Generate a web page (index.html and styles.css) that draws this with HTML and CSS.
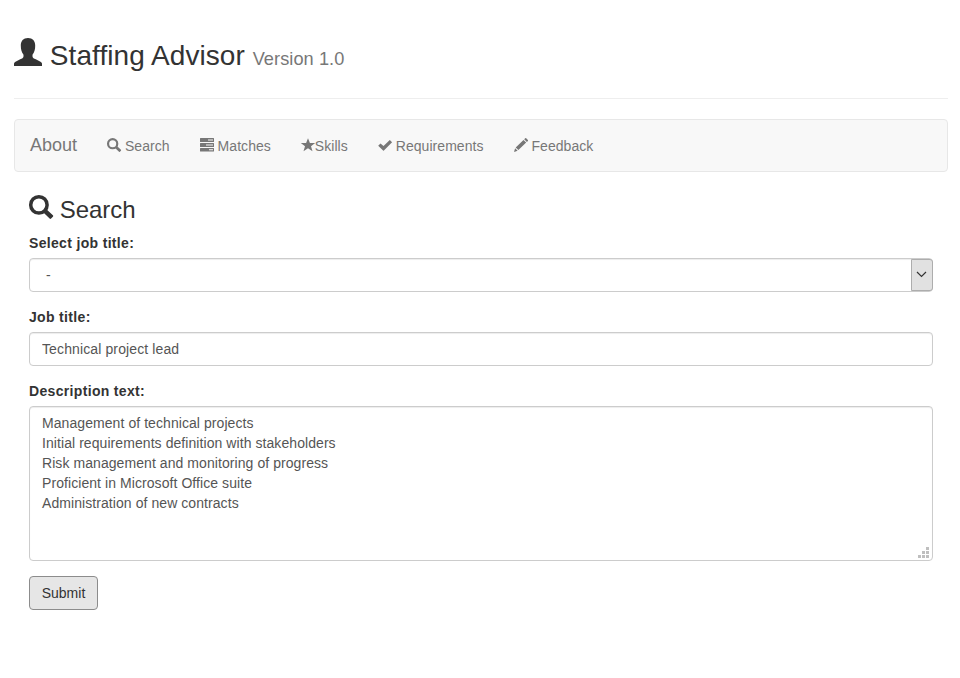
FILE: index.html
```html
<!DOCTYPE html>
<html lang="en">
<head>
<meta charset="utf-8">
<title>Staffing Advisor</title>
<link rel="stylesheet" href="styles.css">
</head>
<body>
<div class="container">
  <header class="page-header">
    <h1><svg class="icon" viewBox="0 0 28 28"><path d="M14 0C9.300 0 6.800 3 6.800 7.500c0 4 .7 6.500 2.700 9.200v1.700c-.3 1.500-1.300 2-3.300 2.900L1.500 23.800C.5 24.400 0 24.900 0 26v2h28v-2c0-1.100-.5-1.600-1.500-2.200l-4.700-2.500c-2-.9-3-1.400-3.300-2.900v-1.700c2-2.700 2.700-5.200 2.700-9.200C21.200 3 18.700 0 14 0z"/></svg> Staffing Advisor <small>Version 1.0</small></h1>
  </header>
  <nav class="navbar">
    <a class="brand">About</a>
    <a><svg class="icon" viewBox="0 0 24 24"><circle cx="9.700" cy="9.700" r="7.900" fill="none" stroke="currentColor" stroke-width="3.700"/><path d="M13.400 16.600l3.200-3.200 7.300 6.800c.5.500.5 1 0 1.500l-1.800 1.800c-.5.500-1 .5-1.500 0z"/></svg> Search</a>
    <a><svg class="icon" viewBox="0 0 14 14"><path fill-rule="evenodd" d="M.5 0h13q.5 0 .5.500v3q0 .5-.5.500H.5Q0 4 0 3.500v-3Q0 0 .5 0zM8 1.500v1h5v-1zM.5 5h13q.5 0 .5.500v3q0 .5-.5.500H.5Q0 9 0 8.500v-3q0-.5.500-.5zM6 6.500v1h7v-1zM.5 10h13q.5 0 .5.500v2.500q0 .5-.5.500H.5Q0 13.500 0 13v-2.500q0-.5.500-.5zM9 11.300v1h4v-1z"/></svg> Matches</a>
    <a><svg class="icon" viewBox="0 0 14 14"><path d="M7 .2l1.900 4.900H14.200L10 8.300l1.500 5L7 10.200l-4.500 3.100 1.500-5L-.2 5.100h5.300z"/></svg>Skills</a>
    <a><svg class="icon" viewBox="0 0 14 14"><path d="M11.800 1.900l2.300 2.400-8.200 8.200q-.4.400-.8 0L.2 7.800 2.500 5.400l3 2.700z"/></svg> Requirements</a>
    <a><svg class="icon" viewBox="0 0 14 14"><path d="M11.200.3q.5-.4 1 0l1.700 1.600q.4.500 0 1l-1 1L10.200 1.200zM9.500 1.900l2.700 2.700-7.800 7.500-2.700-2.600zM1.100 10.300l2.500 2.500L0 14z"/></svg> Feedback</a>
  </nav>
  <main>
    <h3><svg class="icon" viewBox="0 0 24 24"><circle cx="9.900" cy="9.900" r="8.200" fill="none" stroke="currentColor" stroke-width="3.500"/><path d="M13.400 16.600l3.200-3.200 7.300 6.800c.5.500.5 1 0 1.500l-1.800 1.800c-.5.500-1 .5-1.500 0z"/></svg> Search</h3>
    <form>
      <div class="group">
        <label>Select job title:</label>
        <div class="control select"><span>-</span><div class="arrow"><svg width="11" height="7" viewBox="0 0 11 7"><path d="M1 1l4.500 4.500L10 1" fill="none" stroke="#333" stroke-width="1.200"/></svg></div></div>
      </div>
      <div class="group">
        <label for="title">Job title:</label>
        <input id="title" class="control" type="text" value="Technical project lead">
      </div>
      <div class="group area">
        <label for="desc">Description text:</label>
        <textarea id="desc" class="control">Management of technical projects
Initial requirements definition with stakeholders
Risk management and monitoring of progress
Proficient in Microsoft Office suite
Administration of new contracts</textarea>
        <svg class="grip" width="11" height="11" viewBox="0 0 11 11"><path d="M8 0h3v3H8zM4 4h3v3H4zM8 4h3v3H8zM0 8h3v3H0zM4 8h3v3H4zM8 8h3v3H8z"/></svg>
      </div>
      <button type="button">Submit</button>
    </form>
  </main>
</div>
</body>
</html>
```
FILE: styles.css
```css
* { box-sizing: border-box; }
body {
  margin: 0;
  background: #fff;
  color: #333;
  font: 14px/20px "Liberation Sans", Arial, sans-serif;
}
.container { margin: 0 12px 0 14px; padding-top: 38px; }
.icon {
  display: inline-block;
  width: 1em;
  height: 1em;
  fill: currentColor;
  overflow: visible;
  vertical-align: -1px;
}
h1, h3 { margin: 0; font-weight: 400; }
.page-header { height: 61px; border-bottom: 1px solid #eee; }
h1 { font-size: 28px; line-height: 31px; letter-spacing: .06px; }
h1 small { font-size: 18.2px; color: #777; }
.navbar {
  display: flex;
  height: 53px;
  margin-top: 20px;
  border: 1px solid #e7e7e7;
  border-radius: 4px;
  background: #f8f8f8;
  color: #777;
}
.navbar a { padding: 16px 15px; letter-spacing: .05px; }
.navbar .brand { padding-top: 15px; font-size: 18px; letter-spacing: 0; }
main { padding: 23px 15px 0; }
h3 { height: 26px; margin-bottom: 12px; font-size: 24px; line-height: 30px; }
h3 .icon { vertical-align: -1px; }
.group { margin-bottom: 15px; }
label { display: block; margin-bottom: 5px; font-weight: 700; letter-spacing: .33px; }
.control {
  display: block;
  width: 100%;
  height: 34px;
  padding: 6px 12px;
  border: 1px solid #ccc;
  border-radius: 4px;
  background: #fff;
  box-shadow: inset 0 1px 1px rgba(0, 0, 0, .075);
  color: #555;
  font: inherit;
  letter-spacing: .12px;
}
.select { display: flex; justify-content: space-between; padding: 0 0 0 16px; }
.select span { padding-top: 6px; }
.arrow {
  display: flex;
  align-items: center;
  justify-content: center;
  width: 22px;
  margin-right: -1px;
  padding: 0 1px 1px 0;
  border: 1px solid #adadad;
  border-radius: 0 3px 3px 0;
  background: #e1e1e1;
}
.area { position: relative; }
textarea.control { height: 155px; resize: none; overflow: hidden; letter-spacing: .07px; }
.grip { position: absolute; right: 4px; bottom: 3px; fill: #bfbfbf; }
button {
  display: block;
  width: 69px;
  height: 34px;
  padding: 0;
  border: 1px solid #8c8c8c;
  border-radius: 4px;
  background: #e6e6e6;
  color: #333;
  font: inherit;
}
```
